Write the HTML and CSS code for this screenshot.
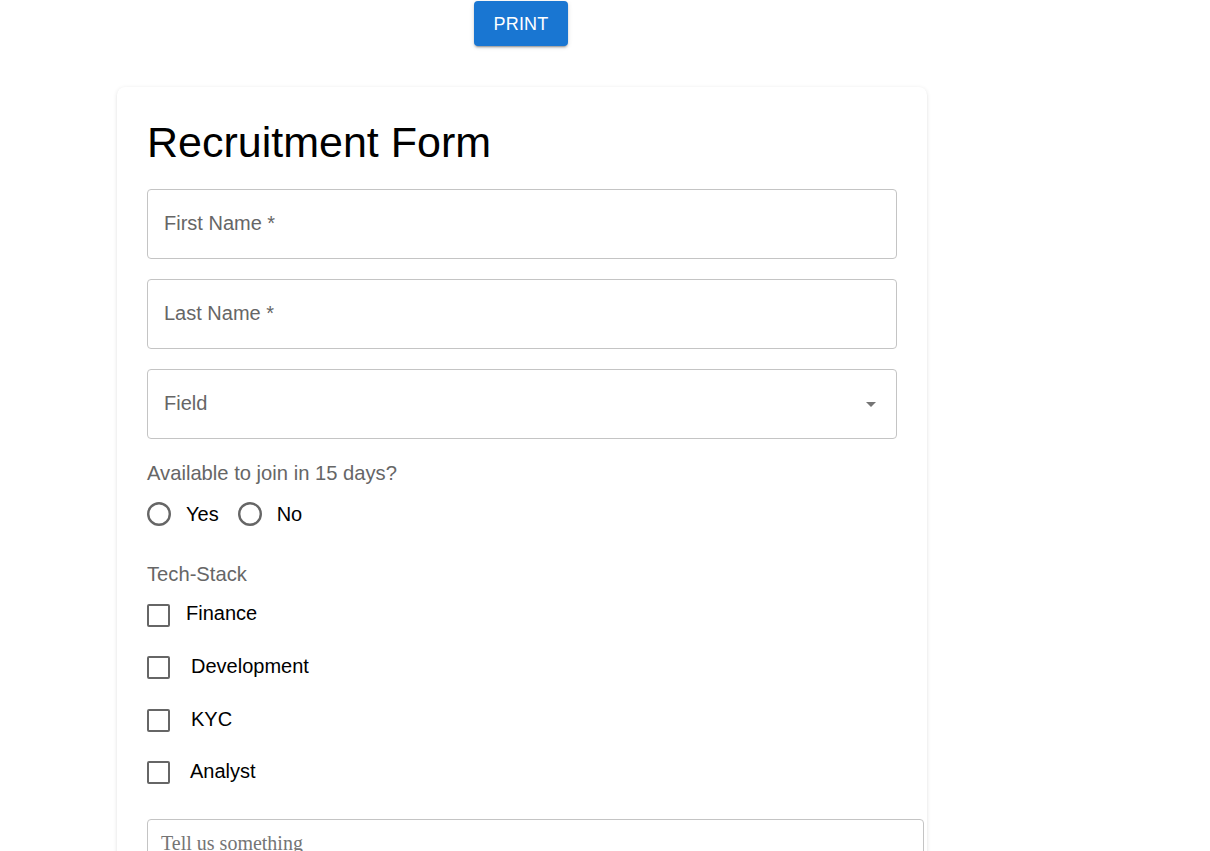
FILE: index.html
```html
<!DOCTYPE html>
<html lang="en">
<head>
<meta charset="utf-8">
<title>Recruitment Form</title>
<link rel="stylesheet" href="styles.css">
</head>
<body>
<div class="page">
  <div class="toolbar">
    <button class="print-btn" type="button">PRINT</button>
  </div>
  <div class="card">
    <h1 class="title">Recruitment Form</h1>
    <div class="field"><span class="field-label">First Name *</span></div>
    <div class="field"><span class="field-label">Last Name *</span></div>
    <div class="field select">
      <span class="field-label">Field</span>
      <svg class="arrow" width="10" height="5" viewBox="0 0 10 5"><path d="M0 0 L5 5 L10 0 Z" fill="#757575"/></svg>
    </div>
    <div class="group-label join-label">Available to join in 15 days?</div>
    <div class="radio-row">
      <label class="radio"><svg width="24" height="24" viewBox="0 0 24 24"><circle cx="12" cy="12" r="10.8" fill="none" stroke="#666" stroke-width="2.4"/></svg><span class="radio-text">Yes</span></label>
      <label class="radio"><svg width="24" height="24" viewBox="0 0 24 24"><circle cx="12" cy="12" r="10.8" fill="none" stroke="#666" stroke-width="2.4"/></svg><span class="radio-text">No</span></label>
    </div>
    <div class="group-label stack-label">Tech-Stack</div>
    <div class="checks">
      <label class="check"><span class="box"></span><span class="check-text t-finance">Finance</span></label>
      <label class="check"><span class="box"></span><span class="check-text t-dev">Development</span></label>
      <label class="check"><span class="box"></span><span class="check-text t-kyc">KYC</span></label>
      <label class="check"><span class="box"></span><span class="check-text t-analyst">Analyst</span></label>
    </div>
    <textarea class="notes" placeholder="Tell us something"></textarea>
  </div>
</div>
</body>
</html>
```
FILE: styles.css
```css
html, body {
  margin: 0;
  padding: 0;
  background: #fff;
}
body {
  font-family: "Liberation Sans", Arial, sans-serif;
}
.page {
  width: 810px;
  margin-left: 117px;
}
.toolbar {
  display: flex;
  justify-content: center;
  padding-top: 1px;
}
.print-btn {
  height: 45px;
  width: 94px;
  margin-right: 2px;
  border: none;
  border-radius: 4px;
  background: #1976d2;
  color: #fff;
  font-family: "Liberation Sans", Arial, sans-serif;
  font-size: 18px;
  letter-spacing: 0.2px;
  box-shadow: 0 3px 1px -2px rgba(0,0,0,0.2), 0 2px 2px 0 rgba(0,0,0,0.14), 0 1px 5px 0 rgba(0,0,0,0.12);
  padding: 2px 0 0 0;
}
.card {
  margin-top: 41px;
  background: #fff;
  border-radius: 8px;
  box-shadow: 0 2px 1px -1px rgba(0,0,0,0.14), 0 1px 1px 0 rgba(0,0,0,0.09), 0 1px 4px 0 rgba(0,0,0,0.11);
  padding: 32px 30px 40px 30px;
  height: 900px;
}
.title {
  margin: 0 0 24px 0;
  font-size: 43px;
  line-height: 46px;
  font-weight: 400;
  color: #000;
}
.field {
  box-sizing: border-box;
  height: 70px;
  border: 1px solid #c4c4c4;
  border-radius: 4px;
  display: flex;
  align-items: center;
  justify-content: space-between;
  padding: 0 20px 0 16px;
  margin-bottom: 20px;
}
.field.select {
  margin-bottom: 0;
}
.field-label {
  font-size: 20px;
  color: #666;
  margin-top: -2px;
}
.arrow {
  display: block;
  margin-top: 1px;
}
.group-label {
  font-size: 20.2px;
  line-height: 23px;
  color: #666;
}
.join-label {
  margin-top: 23px;
}
.radio-row {
  display: flex;
  align-items: center;
  gap: 19px;
  margin-top: 17px;
  height: 24px;
}
.radio {
  display: flex;
  align-items: center;
  gap: 15px;
}
.radio svg {
  display: block;
}
.radio-text {
  font-size: 20px;
  color: #000;
  margin-top: 1px;
}
.stack-label {
  margin-top: 37px;
}
.checks {
  margin-top: 2px;
}
.check {
  display: flex;
  align-items: center;
  height: 52.5px;
}
.box {
  box-sizing: border-box;
  width: 23px;
  height: 23px;
  border: 2.4px solid #666;
  border-radius: 2px;
  margin-top: 2px;
}
.check-text {
  font-size: 20px;
  color: #000;
}
.t-finance { margin-left: 16px; margin-top: -2px; }
.t-dev { margin-left: 21px; }
.t-kyc { margin-left: 21px; }
.t-analyst { margin-left: 20px; }
.notes {
  display: block;
  box-sizing: border-box;
  margin-top: 21px;
  width: 777px;
  height: 120px;
  border: 1px solid #c4c4c4;
  border-radius: 4px;
  padding: 12px 13px;
  font-family: "Liberation Serif", "Times New Roman", serif;
  font-size: 20px;
  resize: none;
  outline: none;
}
.notes::placeholder {
  color: #757575;
}
```
